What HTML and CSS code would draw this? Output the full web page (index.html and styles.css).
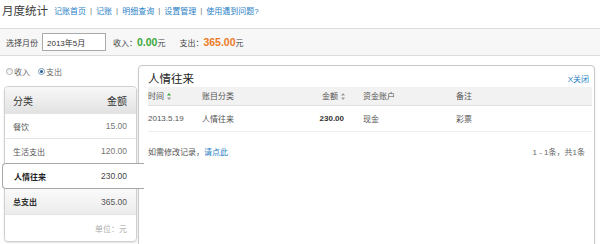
FILE: index.html
```html
<!DOCTYPE html>
<html lang="zh-CN">
<head>
<meta charset="utf-8">
<title>月度统计</title>
<link rel="stylesheet" href="styles.css">
</head>
<body>
<div class="page">
  <div class="topbar">
    <h1 class="title">月度统计</h1>
    <nav class="nav">
      <a href="#">记账首页</a><span class="sep">|</span><a href="#">记账</a><span class="sep">|</span><a href="#">明细查询</a><span class="sep">|</span><a href="#">设置管理</a><span class="sep">|</span><a href="#">使用遇到问题?</a>
    </nav>
  </div>
  <div class="toolbar">
    <span class="label">选择月份</span>
    <input class="month" type="text" value="2013年5月">
    <span class="stat">收入：<b class="income">0.00</b>元</span>
    <span class="stat">支出：<b class="expense">365.00</b>元</span>
  </div>
  <div class="main">
    <div class="side">
      <div class="radios">
        <label class="radio"><span class="dot"></span>收入</label>
        <label class="radio"><span class="dot on"></span>支出</label>
      </div>
      <div class="cats">
        <div class="cat head"><span>分类</span><span>金额</span></div>
        <div class="cat"><span>餐饮</span><span class="num">15.00</span></div>
        <div class="cat"><span>生活支出</span><span class="num">120.00</span></div>
        <div class="cat sel"><span>人情往来</span><span class="num">230.00</span></div>
        <div class="cat total"><span>总支出</span><span class="num">365.00</span></div>
        <div class="cat unit"><span></span><span>单位：元</span></div>
      </div>
    </div>
    <div class="detail">
      <div class="dhead">
        <h2 class="dtitle">人情往来</h2>
        <a href="#" class="close">X关闭</a>
      </div>
      <table class="grid">
        <colgroup><col class="c1"><col class="c2"><col class="c3"><col class="c4"><col class="c5"></colgroup>
        <thead>
          <tr>
            <th>时间<svg class="sort" width="4" height="7" viewBox="0 0 4 7"><path d="M2 0L4 2.6H0z" fill="#3aaa35"/><path d="M2 7L4 4.4H0z" fill="#9a9a9a"/></svg></th>
            <th>账目分类</th>
            <th class="r">金额<svg class="sort" width="4" height="7" viewBox="0 0 4 7"><path d="M2 0L4 2.6H0z" fill="#9a9a9a"/><path d="M2 7L4 4.4H0z" fill="#9a9a9a"/></svg></th>
            <th>资金账户</th>
            <th>备注</th>
          </tr>
        </thead>
        <tbody>
          <tr>
            <td>2013.5.19</td>
            <td>人情往来</td>
            <td class="r amt">230.00</td>
            <td>现金</td>
            <td>彩票</td>
          </tr>
        </tbody>
      </table>
      <div class="foot">
        <span>如需修改记录，<a href="#">请点此</a></span>
        <span class="pager">1 - 1条，共1条</span>
      </div>
    </div>
  </div>
</div>
</body>
</html>
```
FILE: styles.css
```css
* { box-sizing: border-box; }
html, body { margin: 0; padding: 0; background: #fff; }
body {
  font-family: "Liberation Sans", "Noto Sans CJK SC", sans-serif;
  font-size: 8px;
  color: #555;
  width: 600px;
  height: 244px;
  overflow: hidden;
}
a { color: #2a7fc6; text-decoration: none; }

.topbar {
  display: flex;
  align-items: center;
  height: 28px;
  padding: 0 0 8px 2px;
}
.title {
  margin: 0;
  font-size: 11.5px;
  font-weight: normal;
  color: #3a3a3a;
  letter-spacing: 0;
}
.nav { margin-left: 6px; font-size: 8px; display: flex; align-items: center; padding-top: 1px; }
.nav .sep { color: #777; margin: 0 4px; }

.toolbar {
  display: flex;
  align-items: center;
  height: 28px;
  background: #f7f7f7;
  border-top: 1px solid #dcdcdc;
  border-bottom: 1px solid #dcdcdc;
  padding-left: 6px;
  color: #444;
}
.month {
  margin-left: 4px;
  width: 64px;
  height: 18px;
  border: 1px solid #a9a9a9;
  padding: 0 4px;
  font: 8px "Liberation Sans", "Noto Sans CJK SC", sans-serif;
  color: #333;
  background: #fff;
}
.stat { margin-left: 7px; display: flex; align-items: baseline; }
.stat + .stat { margin-left: 14px; }
.income { color: #3aa83a; font-size: 10.5px; }
.expense { color: #ee7a1f; font-size: 10.5px; }

.main { display: flex; margin-top: 9px; gap: 1px; }
.side { width: 137px; flex: none; }
.radios { display: flex; align-items: center; height: 12px; padding-left: 6px; gap: 8px; color: #666; }
.radio { display: flex; align-items: center; }
.dot {
  width: 7px; height: 7px; border-radius: 50%;
  border: 1px solid #b0b0b0;
  background: linear-gradient(#e8e8e8, #fff);
  margin-right: 1px;
  position: relative;
}
.dot.on { border-color: #7a99b8; background: #fff; }
.dot.on::after {
  content: ""; position: absolute; left: 1px; top: 1px; width: 3px; height: 3px; border-radius: 50%;
  background: #1c5a96;
}

.cats {
  margin: 9px 0 0 4px;
  width: 133px;
  border: 1px solid #d0d0d0;
  border-radius: 4px;
  box-shadow: 0 1px 2px rgba(0,0,0,0.12);
}
.cat {
  display: flex;
  justify-content: space-between;
  align-items: center;
  height: 25px;
  padding: 0 9px 0 8px;
  border-top: 1px solid #e4e4e4;
  color: #555;
}
.cat .num { color: #777; font-size: 8.5px; }
.cat.head {
  height: 26px;
  border-top: none;
  border-radius: 4px 4px 0 0;
  background: linear-gradient(#f8f8f8, #e2e2e2);
  color: #333;
  font-size: 10px;
}
.cat.sel {
  position: relative;
  z-index: 1;
  margin: 0 -8px 0 -3px;
  padding-left: 11px;
  padding-right: 17px;
  height: 26px;
  background: #fff;
  border: 1px solid #a8a8a8;
  border-right: none;
  border-radius: 4px 0 0 4px;
  color: #222;
  font-weight: bold;
}
.cat.sel .num { color: #444; font-weight: normal; }
.cat.total {
  background: linear-gradient(#fafafa, #ececec);
  color: #333;
  font-weight: bold;
  border-top: none;
}
.cat.total .num { font-weight: normal; color: #555; }
.cat.unit { height: 27px; color: #aaa; }

.detail {
  width: 457px;
  height: 200px;
  border: 1px solid #c8c8c8;
  border-radius: 4px;
  padding: 0 2px 0 9px;
  box-shadow: 0 1px 2px rgba(0,0,0,0.1);
}
.dhead { display: flex; justify-content: space-between; align-items: center; height: 21px; padding-top: 2px; }
.dtitle { margin: 0; font-size: 11.5px; font-weight: normal; color: #222; }
.close { font-size: 8px; margin-right: 3px; margin-top: 1px; }

.grid { width: 444px; border-collapse: collapse; table-layout: fixed; }
.c1 { width: 54px; } .c2 { width: 98px; } .c3 { width: 63px; } .c4 { width: 93px; } .c5 { width: 136px; }
.grid th {
  height: 18px;
  background: #f2f2f2;
  border-bottom: 1px solid #e0e0e0;
  font-weight: normal;
  text-align: left;
  color: #555;
  padding: 0;
  white-space: nowrap;
}
.grid td {
  height: 26px;
  border-bottom: 1px solid #eee;
  padding: 0;
  color: #555;
}
.grid .r { text-align: right; padding-right: 19px; }
.grid th.r { padding-right: 18px; }
.grid .amt { font-weight: bold; color: #333; }
.sort { vertical-align: -1px; margin-left: 3px; }

.foot { display: flex; justify-content: space-between; margin-top: 14px; padding-right: 7px; color: #555; }
.pager { color: #666; }
```
